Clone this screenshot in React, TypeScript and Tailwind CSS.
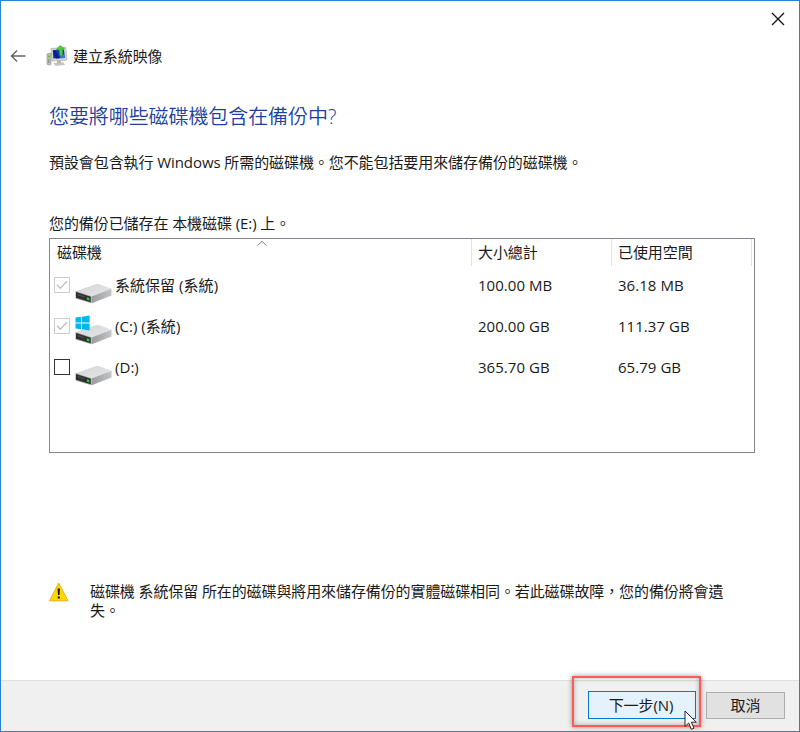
import React from 'react';

interface Drive {
  name: string;
  total: string;
  used: string;
  locked: boolean;
  windows?: boolean;
}

const drives: Drive[] = [
  { name: '系統保留 (系統)', total: '100.00 MB', used: '36.18 MB', locked: true },
  { name: '(C:) (系統)', total: '200.00 GB', used: '111.37 GB', locked: true, windows: true },
  { name: '(D:)', total: '365.70 GB', used: '65.79 GB', locked: false },
];

const BackupIcon: React.FC = () => (
  <svg className="h-[22px] w-[22px] shrink-0" viewBox="0 0 22 22">
    <path d="M5 3.500 19.800 2.500 20.800 15 6 16z" fill="#d9d9d4" stroke="#a8a8a4" strokeWidth=".7" />
    <path d="M6.800 5.300 18 4.500 18.800 13 7.300 13.600z" fill="#1030b8" />
    <path d="M7 5.300 9 5.200 13.500 13.300 10 13.500z" fill="#0a1a80" />
    <path d="M13 9.500h5.500l.3 3.500-3.800.2z" fill="#3d74e4" />
    <path d="M11 15.700h4v3h-4z" fill="#b7b7b2" />
    <path d="M8 18.500l9-.7 1.500 1.700-9 1z" fill="#c9c9c5" stroke="#aaa9a5" strokeWidth=".5" />
    <path d="M1 9l4-1v11.500l-3 .5-1-1z" fill="#c2c2bc" stroke="#8c8c86" strokeWidth=".6" />
    <path d="M2 10.500h2v2H2z" fill="#5fc143" />
    <path d="M2.800 14v4" stroke="#76766f" strokeWidth=".8" />
    <path d="M10 4.800 14 .500 18.500 3.700 16.400 4.100 16.800 8.200Q16.600 10.600 14.500 11.600 13.600 9 12.900 4.700z" fill="#48cb40" stroke="#2b9b2a" strokeWidth=".5" />
  </svg>
);

const DriveIcon: React.FC<{ windows?: boolean }> = ({ windows }) => (
  <svg className="h-[32px] w-[40px] shrink-0" viewBox="0 0 40 32">
    <defs>
      <linearGradient id="driveTop" x1="0" y1="0" x2="1" y2="1">
        <stop offset="0" stopColor="#d3d4d6" />
        <stop offset="1" stopColor="#e6e7e9" />
      </linearGradient>
      <linearGradient id="driveSide" x1="0" y1="0" x2="1" y2="0">
        <stop offset="0" stopColor="#9b9c9e" />
        <stop offset="1" stopColor="#c3c4c6" />
      </linearGradient>
    </defs>
    <path d="M1.500 18.300 21.500 11.200Q23 10.700 24.500 11.100L37.500 15.800 17.500 23.800z" fill="url(#driveTop)" />
    <path d="M17.500 23.500 37.500 15.800V22.500L18.500 30 17.500 30.200z" fill="url(#driveSide)" />
    <path d="M1.500 18 17.500 23.300V30.200L1.500 25.400z" fill="#a2a3a4" />
    <path d="M2 19 16.700 23.800V29.200L2 24.700z" fill="#2c302e" />
    <path d="M3.800 21 10.500 23.200V24.600L3.800 22.400z" fill="#4b504d" />
    <path d="M12.800 24.300 15.300 25.100v2.400l-2.500-.8z" fill="#23d52c" />
    {windows && (
      <g fill="#00b6ee">
        <path d="M1.500 3.600 7.200 2.800V8.600H1.500z" />
        <path d="M8 2.700 15.600 1.600V8.600H8z" />
        <path d="M1.500 9.400H7.200V15.200L1.500 14.400z" />
        <path d="M8 9.400H15.600V16.400L8 15.300z" />
      </g>
    )}
  </svg>
);

const CheckBox: React.FC<{ locked: boolean }> = ({ locked }) => (
  <svg className="mt-1 h-4 w-4 shrink-0" viewBox="0 0 16 16" fill="none">
    <rect x=".5" y=".5" width="15" height="15" fill="#fff" stroke={locked ? '#cccccc' : '#333333'} />
    {locked && <path d="M3 7.800 6.300 11.300 13 4.300" stroke="#bfbfbf" strokeWidth="1.300" />}
  </svg>
);

export default function App() {
  return (
    <div className="relative flex h-[732px] w-[800px] flex-col overflow-hidden border border-[#2483d2] bg-white font-['Open_Sans','Noto_Sans_CJK_TC',sans-serif] text-[15px] leading-[20px] tracking-[-0.08px] text-[#1a1a1a]">
      <div className="flex h-[36px] shrink-0 justify-end pt-[11px] pr-[14px]">
        <svg className="h-[14px] w-[14px]" viewBox="0 0 14 14" fill="none" stroke="#111" strokeWidth="1.300">
          <path d="M1 1 13 13M13 1 1 13" />
        </svg>
      </div>

      <header className="flex h-[38px] shrink-0 items-center pl-[9px]">
        <svg className="h-[14px] w-[16px]" viewBox="0 0 16 14" fill="none" stroke="#666" strokeWidth="1.500">
          <path d="M15.500 7H1.500M7 1.500 1.500 7 7 12.500" />
        </svg>
        <div className="ml-[20px] flex items-center gap-[5px]">
          <BackupIcon />
          <span className="pb-px">建立系統映像</span>
        </div>
      </header>

      <main className="flex flex-1 flex-col pl-[48px]">
        <h1 className="mt-[28px] text-[20px] leading-[28px] font-[350] text-[#1b419f]">您要將哪些磁碟機包含在備份中?</h1>
        <p className="mt-[21px] whitespace-nowrap">預設會包含執行 Windows 所需的磁碟機。您不能包括要用來儲存備份的磁碟機。</p>
        <p className="mt-[41px] whitespace-nowrap">您的備份已儲存在 本機磁碟 (E:) 上。</p>

        <section className="mt-[5px] h-[215px] w-[706px] border border-[#828790]">
          <div className="flex h-[27px] leading-[27px]">
            <div className="relative w-[422px] border-r border-[#e2e2e2] pl-[7px]">
              磁碟機
              <svg className="absolute top-[1px] left-[207px] h-[7px] w-[10px]" viewBox="0 0 10 7" fill="none" stroke="#777">
                <path d="M.7 5.500 5 1.200 9.300 5.500" />
              </svg>
            </div>
            <div className="w-[140px] border-r border-[#e2e2e2] pl-[6px]">大小總計</div>
            <div className="w-[140px] border-r border-[#e2e2e2] pl-[6px]">已使用空間</div>
          </div>
          {drives.map((drive) => (
            <div key={drive.name} className="flex h-[41px] pt-[7px] tracking-[0.04px]">
              <div className="flex w-[428px] pl-[4px]">
                <CheckBox locked={drive.locked} />
                <div className="ml-[4px]">
                  <DriveIcon windows={drive.windows} />
                </div>
                <span className="ml-[1px] pt-[2px]">{drive.name}</span>
              </div>
              <span className="w-[140px] pt-[2px]">{drive.total}</span>
              <span className="pt-[2px]">{drive.used}</span>
            </div>
          ))}
        </section>

        <div className="mt-[129px] flex">
          <svg className="h-[20px] w-[21px]" viewBox="0 0 21 20">
            <path d="M9.700 1 19 18.800H.5z" fill="#ffd800" stroke="#efae12" strokeLinejoin="round" />
            <path d="M8.600 6.500h2.300l-.4 6.500H9zM8.700 14.500h2.100v2H8.700z" fill="#111" />
          </svg>
          <p className="ml-[20px] w-[640px] leading-[19px] tracking-[-0.1px]">
            磁碟機 系統保留 所在的磁碟與將用來儲存備份的實體磁碟相同。若此磁碟故障，您的備份將會遺失。
          </p>
        </div>
      </main>

      <footer className="flex h-[51px] shrink-0 justify-end gap-[10px] border-t border-[#dfdfdf] bg-[#f0f0f0] pt-[10px] pr-[14px]">
        <div className="relative">
          <button className="block h-[28px] w-[108px] border border-[#0078d7] bg-[#e5f1fb] pr-[2px] leading-[26px]">下一步(N)</button>
          <div className="pointer-events-none absolute top-[-15px] left-[-16px] h-[51px] w-[129px] border-2 border-[#ff5959] shadow-[0_0_5px_rgba(0,0,0,0.4),inset_0_0_5px_rgba(0,0,0,0.3)]" />
          <svg className="absolute top-[19px] left-[96px] h-[21px] w-[14px]" viewBox="0 0 14 21">
            <path d="M1 1V16.500L4.700 13 7.300 19.300 10 18.200 7.400 12.200H12.300z" fill="#fff" stroke="#222" />
          </svg>
        </div>
        <button className="mt-[1px] h-[27px] w-[79px] border border-[#adadad] bg-[#e1e1e1] leading-[25px]">取消</button>
      </footer>
    </div>
  );
}
